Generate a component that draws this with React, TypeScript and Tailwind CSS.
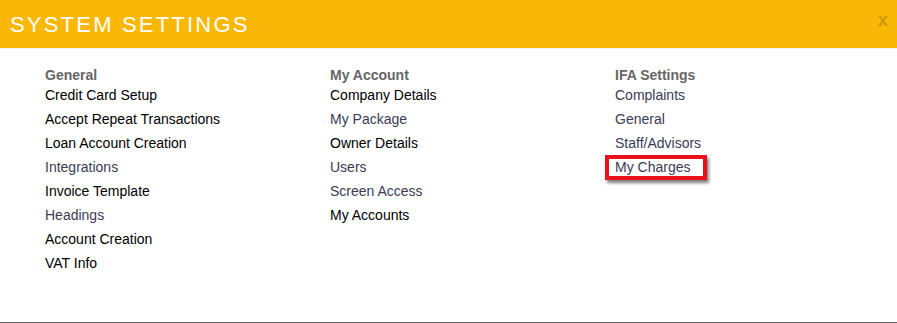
const columns = [
  {
    title: "General",
    offset: "pl-0",
    items: [
      { label: "Credit Card Setup", dim: false },
      { label: "Accept Repeat Transactions", dim: false },
      { label: "Loan Account Creation", dim: false },
      { label: "Integrations", dim: true },
      { label: "Invoice Template", dim: false },
      { label: "Headings", dim: true },
      { label: "Account Creation", dim: false },
      { label: "VAT Info", dim: false },
    ],
  },
  {
    title: "My Account",
    offset: "pl-[1px]",
    items: [
      { label: "Company Details", dim: false },
      { label: "My Package", dim: true },
      { label: "Owner Details", dim: false },
      { label: "Users", dim: true },
      { label: "Screen Access", dim: true },
      { label: "My Accounts", dim: false },
    ],
  },
  {
    title: "IFA Settings",
    offset: "pl-[2px]",
    items: [
      { label: "Complaints", dim: true },
      { label: "General", dim: true },
      { label: "Staff/Advisors", dim: true },
      { label: "My Charges", dim: true, highlight: true },
    ],
  },
];

export default function App() {
  return (
    <div className="w-[897px] h-[323px] bg-white flex flex-col font-['Liberation_Sans',Arial,sans-serif] border-b border-[#666]">
      <div className="h-[48px] bg-[#f9b808] flex items-center justify-between pl-[10px] pr-[9px] shrink-0">
        <h1 className="text-white text-[22px] tracking-[2.2px] leading-none pt-[2px]">
          SYSTEM SETTINGS
        </h1>
        <span className="text-[#cf9606] font-bold text-[18px] leading-none self-start mt-[11px]">x</span>
      </div>
      <div className="h-px bg-[#f3f3f3]" />
      <div className="flex pl-[45px] pt-[18px]">
        {columns.map((col) => (
          <div key={col.title} className={`w-[285px] flex flex-col ${col.offset}`}>
            <div className="text-[#666] font-bold text-[14px] leading-[16px]">{col.title}</div>
            <ul>
              {col.items.map((item) => (
                <li key={item.label} className="h-[24px] flex items-center text-[14px]">
                  {item.highlight ? (
                    <span className="-ml-[10px] px-[6px] leading-[17px] border-[4px] border-[#e8101a] shadow-[2px_3px_3px_rgba(0,0,0,0.5)] text-[#3b3b54] w-[102px]">
                      {item.label}
                    </span>
                  ) : (
                    <span className={item.dim ? "text-[#3b3b54]" : "text-black"}>{item.label}</span>
                  )}
                </li>
              ))}
            </ul>
          </div>
        ))}
      </div>
    </div>
  );
}
